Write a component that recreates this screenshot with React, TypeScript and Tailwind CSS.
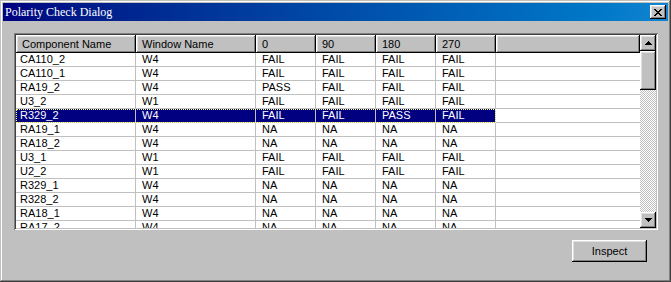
import React from "react";

type Row = [string, string, string, string, string, string];

const rows: Row[] = [
  ["CA110_2", "W4", "FAIL", "FAIL", "FAIL", "FAIL"],
  ["CA110_1", "W4", "FAIL", "FAIL", "FAIL", "FAIL"],
  ["RA19_2", "W4", "PASS", "FAIL", "FAIL", "FAIL"],
  ["U3_2", "W1", "FAIL", "FAIL", "FAIL", "FAIL"],
  ["R329_2", "W4", "FAIL", "FAIL", "PASS", "FAIL"],
  ["RA19_1", "W4", "NA", "NA", "NA", "NA"],
  ["RA18_2", "W4", "NA", "NA", "NA", "NA"],
  ["U3_1", "W1", "FAIL", "FAIL", "FAIL", "FAIL"],
  ["U2_2", "W1", "FAIL", "FAIL", "FAIL", "FAIL"],
  ["R329_1", "W4", "NA", "NA", "NA", "NA"],
  ["R328_2", "W4", "NA", "NA", "NA", "NA"],
  ["RA18_1", "W4", "NA", "NA", "NA", "NA"],
  ["RA17_2", "W4", "NA", "NA", "NA", "NA"],
];

const headers = ["Component Name", "Window Name", "0", "90", "180", "270"];
const widths = ["w-[120px]", "w-[120px]", "w-[60px]", "w-[60px]", "w-[60px]", "w-[60px]"];

const raised =
  "bg-[#c0c0c0] shadow-[inset_-1px_-1px_#000000,inset_1px_1px_#ffffff,inset_-2px_-2px_#808080,inset_2px_2px_#dfdfdf]";

const Arrow = ({ down }: { down?: boolean }) => (
  <svg width="7" height="4" viewBox="0 0 7 4" shapeRendering="crispEdges">
    {down ? (
      <path d="M0 0h7v1H0zM1 1h5v1H1zM2 2h3v1H2zM3 3h1v1H3z" fill="#000" />
    ) : (
      <path d="M3 0h1v1H3zM2 1h3v1H2zM1 2h5v1H1zM0 3h7v1H0z" fill="#000" />
    )}
  </svg>
);

const App = () => {
  return (
    <div
      className="w-[671px] h-[282px] bg-[#c0c0c0] p-[3px] flex flex-col shadow-[inset_-1px_-1px_#404040,inset_1px_1px_#c0c0c0,inset_-2px_-2px_#808080,inset_2px_2px_#ffffff] text-[11px] text-black"
      style={{ fontFamily: '"Liberation Sans", Arial, sans-serif' }}
    >
      {/* title bar */}
      <div className="h-[18px] flex items-center justify-between bg-linear-to-r from-[#000080] to-[#1084d0] pl-[2px] pr-[2px]">
        <span
          className="text-white text-[12px] leading-none"
          style={{ fontFamily: '"Liberation Serif", "Times New Roman", serif' }}
        >
          Polarity Check Dialog
        </span>
        <div className={`w-[16px] h-[14px] flex items-center justify-center ${raised}`}>
          <svg width="8" height="7" viewBox="0 0 8 7" shapeRendering="crispEdges">
            <path
              d="M0 0h2v1H0zM6 0h2v1H6zM1 1h2v1H1zM5 1h2v1H5zM2 2h4v1H2zM3 3h2v1H3zM2 4h4v1H2zM1 5h2v1H1zM5 5h2v1H5zM0 6h2v1H0zM6 6h2v1H6z"
              fill="#000"
            />
          </svg>
        </div>
      </div>

      <div className="flex flex-col pl-[11px] pt-[12px]">
        {/* list view */}
        <div className="w-[644px] h-[197px] p-[2px] bg-white flex shadow-[inset_1px_1px_#808080,inset_-1px_-1px_#ffffff,inset_2px_2px_#404040,inset_-2px_-2px_#c0c0c0]">
          <div className="w-[624px] h-[193px] overflow-hidden flex flex-col">
            <div className="flex h-[18px] shrink-0">
              {headers.map((h, i) => (
                <div key={h} className={`${widths[i]} h-[18px] pl-[6px] leading-[18px] ${raised}`}>
                  {h}
                </div>
              ))}
              <div className={`flex-1 h-[18px] ${raised}`} />
            </div>
            {rows.map((r, ri) => {
              const sel = ri === 4;
              return (
                <div key={r[0]} className="flex h-[14px] shrink-0">
                  <div
                    className={`flex w-[480px] ${
                      sel ? "bg-[#000080] text-white outline outline-dotted outline-[#ffff80] -outline-offset-1" : ""
                    }`}
                  >
                    {r.map((c, ci) => (
                      <div
                        key={ci}
                        className={`${widths[ci]} h-[14px] border-r border-b border-[#c0c0c0] leading-[13px] ${
                          ci === 0 ? "pl-[4px]" : "pl-[6px]"
                        }`}
                      >
                        {c}
                      </div>
                    ))}
                  </div>
                  <div className="flex-1 h-[14px] border-b border-[#c0c0c0]" />
                </div>
              );
            })}
          </div>
          {/* scrollbar */}
          <div className="w-[16px] h-[193px] flex flex-col">
            <div className={`h-[16px] flex items-center justify-center ${raised}`}>
              <Arrow />
            </div>
            <div className="flex-1 flex flex-col bg-[repeating-conic-gradient(#c0c0c0_0%_25%,#ffffff_0%_50%)] bg-[length:2px_2px]">
              <div className={`h-[39px] ${raised}`} />
            </div>
            <div className={`h-[16px] flex items-center justify-center ${raised}`}>
              <Arrow down />
            </div>
          </div>
        </div>

        {/* buttons */}
        <div className="flex justify-end pr-[21px] pt-[10px]">
          <button className={`w-[75px] h-[22px] flex items-center justify-center ${raised}`}>Inspect</button>
        </div>
      </div>
    </div>
  );
};

export default App;
